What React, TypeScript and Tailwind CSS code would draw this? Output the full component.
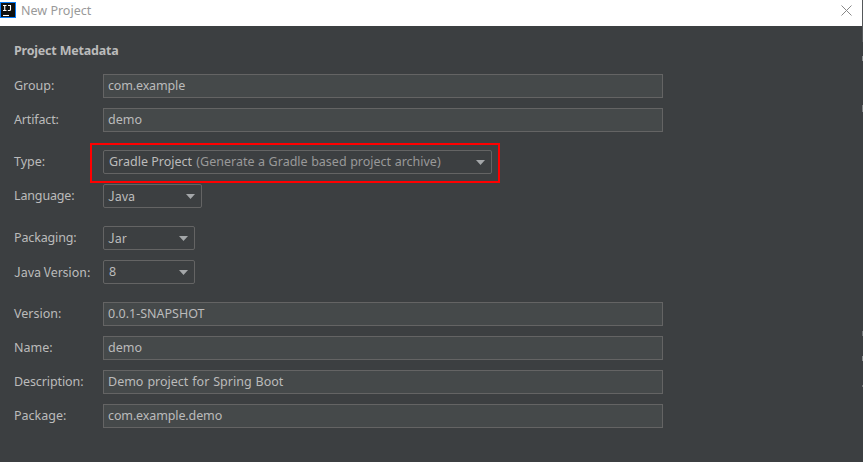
import React from 'react';

type RowProps = { label: string; labelClass?: string; children: React.ReactNode };

function Row({ label, labelClass = '', children }: RowProps) {
  return (
    <div className="flex h-6 items-center">
      <div className={`w-[89px] shrink-0 whitespace-nowrap ${labelClass}`}>{label}</div>
      {children}
    </div>
  );
}

function TextBox({ value, textClass = '' }: { value: string; textClass?: string }) {
  return (
    <div className="flex h-6 w-[560px] items-center border border-[#646464] bg-[#45494a] pl-1 whitespace-nowrap">
      <span className={textClass}>{value}</span>
    </div>
  );
}

function Combo({
  className,
  textClass = '',
  children,
}: {
  className: string;
  textClass?: string;
  children: React.ReactNode;
}) {
  return (
    <div
      className={`flex h-6 items-center justify-between rounded-[2px] border border-[#646464] pr-[6px] pl-[5px] whitespace-nowrap ${className}`}
    >
      <span className={textClass}>{children}</span>
      <svg width="9" height="5" viewBox="0 0 9 5">
        <path d="M0 0H9L4.5 5Z" fill="#a4a7a9" />
      </svg>
    </div>
  );
}

function Logo() {
  return (
    <svg width="16" height="16" viewBox="0 0 16 16" className="shrink-0">
      <rect width="16" height="16" fill="#087cfa" />
      <rect x="1" y="1" width="14" height="14" fill="#101010" />
      <path
        d="M3 3.5H6.5M4.75 3.5V8.5M3 8.5H6.5M8 3.5H10.5V7.5Q10.5 8.5 9.5 8.5H7.8"
        fill="none"
        stroke="#fff"
        strokeWidth="1.1"
      />
      <path d="M3 13.5H9" stroke="#fff" strokeWidth="1.1" />
    </svg>
  );
}

export default function App() {
  return (
    <div className="flex h-[462px] w-[863px] overflow-hidden bg-[#3c3f41] font-['Noto_Sans',sans-serif] text-[12.5px] leading-4 text-[#bbbbbb]">
      <div className="flex w-[862px] flex-col">
        <header className="flex h-[26px] items-start justify-between bg-white pt-[2px] pr-[10px] text-[#999999]">
          <div className="flex gap-[5px]">
            <Logo />
            <span className="pt-px">New Project</span>
          </div>
          <svg width="11" height="11" viewBox="0 0 11 11" className="mt-[3px]">
            <path d="M0.5 0.5L10.5 10.5M10.5 0.5L0.5 10.5" stroke="#888" strokeWidth="1" />
          </svg>
        </header>
        <main className="flex flex-col pt-[17px] pl-[14px]">
          <h1 className="h-[31px] font-bold tracking-[-0.2px]">Project Metadata</h1>
          <div className="flex flex-col gap-[18px]">
            <section className="flex flex-col gap-[10px]">
              <Row label="Group:">
                <TextBox value="com.example" textClass="tracking-[-0.15px]" />
              </Row>
              <Row label="Artifact:" labelClass="tracking-[-0.15px]">
                <TextBox value="demo" />
              </Row>
            </section>
            <section className="flex flex-col gap-[10px]">
              <Row label="Type:">
                <div className="relative">
                  <Combo className="w-[389px]">
                    <span>Gradle Project</span>{' '}
                    <span className="ml-px text-[#999999] [word-spacing:0.3px]">
                      (Generate a Gradle based project archive)
                    </span>
                  </Combo>
                  <div className="absolute -top-[7px] -left-[13px] h-[40px] w-[410px] border-2 border-[#ff0000]" />
                </div>
              </Row>
              <Row label="Language:" labelClass="tracking-[-0.15px]">
                <Combo
                  className="w-[99px]"
                  textClass="-ml-px pb-px font-['Noto_Sans_CJK_SC',sans-serif] text-[12.5px]"
                >
                  Java
                </Combo>
              </Row>
            </section>
            <section className="flex flex-col gap-[10px]">
              <Row label="Packaging:" labelClass="tracking-[-0.15px]">
                <Combo
                  className="w-[92px]"
                  textClass="-ml-px pb-px font-['Noto_Sans_CJK_SC',sans-serif] text-[12.5px]"
                >
                  Jar
                </Combo>
              </Row>
              <Row
                label="Java Version:"
                labelClass="pb-px font-['Noto_Sans_CJK_SC',sans-serif] text-[12.5px]"
              >
                <Combo className="w-[92px]">8</Combo>
              </Row>
            </section>
            <section className="flex flex-col gap-[10px]">
              <Row label="Version:">
                <TextBox value="0.0.1-SNAPSHOT" />
              </Row>
              <Row label="Name:">
                <TextBox value="demo" />
              </Row>
              <Row label="Description:" labelClass="tracking-[-0.1px]">
                <TextBox value="Demo project for Spring Boot" textClass="[word-spacing:0.7px]" />
              </Row>
              <Row label="Package:">
                <TextBox value="com.example.demo" textClass="tracking-[-0.12px]" />
              </Row>
            </section>
          </div>
        </main>
      </div>
      <div className="flex w-px flex-col">
        <div className="h-[42px] bg-[#55585a]" />
        <div className="mt-[14px] h-[5px] bg-[#85888a]" />
        <div className="mt-[44px] h-[7px] bg-[#7a7d7f]" />
        <div className="mt-[219px] h-[5px] bg-[#6f7274]" />
        <div className="mt-[20px] h-[5px] bg-[#85888a]" />
        <div className="mt-[24px] h-[2px] bg-[#6f7274]" />
      </div>
    </div>
  );
}
